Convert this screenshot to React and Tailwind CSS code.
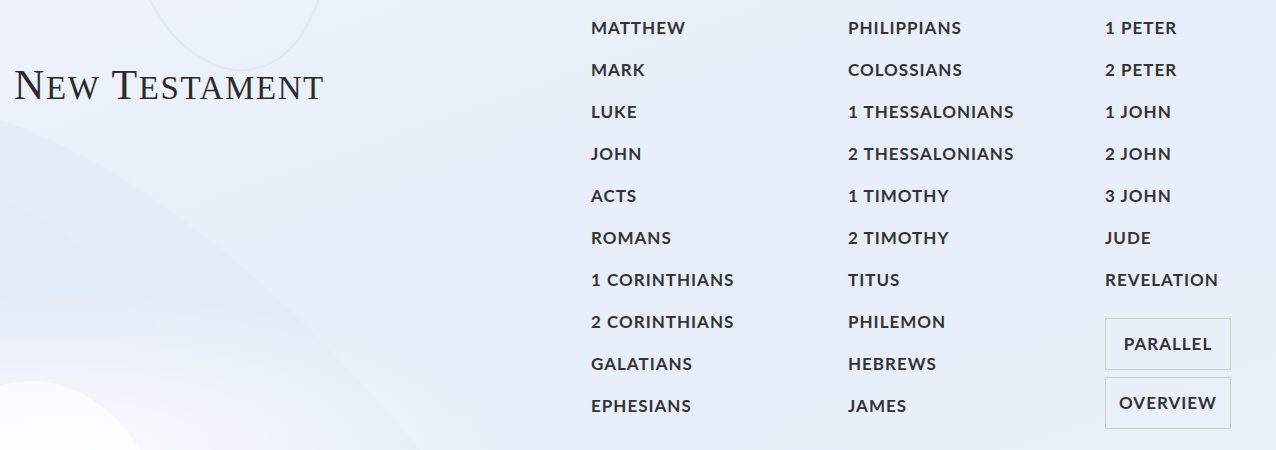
import React from 'react';

const COLUMNS = [
    ['MATTHEW', 'MARK', 'LUKE', 'JOHN', 'ACTS', 'ROMANS', '1 CORINTHIANS', '2 CORINTHIANS', 'GALATIANS', 'EPHESIANS'],
    ['PHILIPPIANS', 'COLOSSIANS', '1 THESSALONIANS', '2 THESSALONIANS', '1 TIMOTHY', '2 TIMOTHY', 'TITUS', 'PHILEMON', 'HEBREWS', 'JAMES'],
    ['1 PETER', '2 PETER', '1 JOHN', '2 JOHN', '3 JOHN', 'JUDE', 'REVELATION'],
];

const Backdrop = () => (
    <svg className="absolute inset-0 w-full h-full" viewBox="0 0 1276 450" preserveAspectRatio="none">
        <defs>
            <linearGradient id="bg" x1="0" y1="0" x2="1" y2="1">
                <stop offset="0" stopColor="#edf2fb" />
                <stop offset="0.5" stopColor="#e7eef9" />
                <stop offset="1" stopColor="#e9f0fa" />
            </linearGradient>
            <radialGradient id="blob" cx="0.05" cy="1" r="0.35">
                <stop offset="0" stopColor="#ffffff" stopOpacity="0.8" />
                <stop offset="1" stopColor="#ffffff" stopOpacity="0" />
            </radialGradient>
        </defs>
        <rect width="1276" height="450" fill="url(#bg)" />
        <path d="M150 0 C175 50 215 72 245 70 C280 68 305 40 318 0" fill="none" stroke="#dce3ee" strokeWidth="2" opacity="0.55" />
        <path d="M0 120 C120 160 260 260 420 450 L0 450 Z" fill="#dfe8f6" opacity="0.45" />
        <path d="M0 200 C90 230 170 330 240 450 L0 450 Z" fill="#e3ebf8" opacity="0.55" />
        <path d="M0 385 C60 370 110 400 140 450 L0 450 Z" fill="#f6f9fe" opacity="0.9" />
        <rect width="1276" height="450" fill="url(#blob)" />
    </svg>
);

// Cinzel-style heading: full capitals for the first letter, smaller capitals for the rest
const SmallCaps = ({ word }) => (
    <span>
        <span className="text-[42px]">{word[0]}</span>
        <span className="text-[33px]">{word.slice(1).toUpperCase()}</span>
    </span>
);

export default function App() {
    return (
        <div className="relative w-[1276px] h-[450px] overflow-hidden">
            <Backdrop />
            <div className="relative flex">
                {/* Heading */}
                <div className="w-[591px] pl-[14px] pt-[60px]">
                    <h2
                        className="leading-[50px] text-[#2b2b2b] tracking-[1.6px] flex gap-[11px] items-baseline"
                        style={{ fontFamily: '"Liberation Serif", serif' }}
                    >
                        <SmallCaps word="New" />
                        <SmallCaps word="Testament" />
                    </h2>
                </div>

                {/* Book list */}
                <div
                    className="grid grid-cols-[257px_257px_170px] pt-[7px] text-[17px] font-bold text-[#333]"
                    style={{ fontFamily: 'Lato, "Open Sans", sans-serif' }}
                >
                    {COLUMNS.map((col, i) => (
                        <div key={i} className="flex flex-col">
                            {col.map((book) => (
                                <a key={book} className="h-[42px] leading-[42px] tracking-[1px] whitespace-nowrap">
                                    {book}
                                </a>
                            ))}
                            {i === 2 && (
                                <div className="flex flex-col gap-[7px] mt-[17px]">
                                    <button className="w-[126px] h-[52px] border border-[#cccccc] text-[17px] font-bold tracking-[1px]">
                                        PARALLEL
                                    </button>
                                    <button className="w-[126px] h-[52px] border border-[#cccccc] text-[17px] font-bold tracking-[1px]">
                                        OVERVIEW
                                    </button>
                                </div>
                            )}
                        </div>
                    ))}
                </div>
            </div>
        </div>
    );
}
